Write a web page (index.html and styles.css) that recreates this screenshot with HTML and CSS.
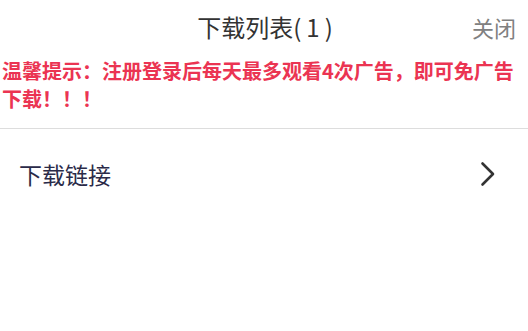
FILE: index.html
```html
<!DOCTYPE html>
<html lang="zh-CN">
<head>
<meta charset="utf-8">
<title>下载列表</title>
<link rel="stylesheet" href="styles.css">
</head>
<body>
<div class="page">
  <header class="header">
    <div class="spacer"></div>
    <h1 class="title">下载列表(<span class="count">1</span>)</h1>
    <div class="close">关闭</div>
  </header>
  <p class="notice">温馨提示：注册登录后每天最多观看4次广告，即可免广告下载！！！</p>
  <div class="divider"></div>
  <div class="row">
    <span class="row-label">下载链接</span>
    <svg class="chevron" width="16" height="26" viewBox="0 0 16 26" aria-hidden="true">
      <path d="M2.5 2.5 L13 13 L2.5 23.5" fill="none" stroke="#333333" stroke-width="2.6" stroke-linecap="round" stroke-linejoin="round"/>
    </svg>
  </div>
</div>
</body>
</html>
```

FILE: styles.css
```css
html, body {
  margin: 0;
  padding: 0;
  background: #ffffff;
}

body {
  font-family: "Noto Sans CJK SC", "Noto Sans", sans-serif;
}

.page {
  width: 528px;
}

.header {
  display: grid;
  grid-template-columns: 1fr auto 1fr;
  align-items: center;
  height: 54px;
}

.title {
  margin: 0;
  font-size: 24px;
  font-weight: 400;
  color: #333333;
  line-height: 30px;
  padding-left: 2px;
}

.count {
  padding: 0 5px;
}

.close {
  justify-self: end;
  padding-right: 12px;
  font-size: 22px;
  color: #808080;
  line-height: 30px;
}

.notice {
  margin: 0;
  padding: 3px 2px 15px 2px;
  font-size: 20px;
  font-weight: 700;
  line-height: 28px;
  color: #eb3452;
}

.divider {
  height: 1px;
  background: #dddddd;
}

.row {
  display: flex;
  align-items: center;
  justify-content: space-between;
  height: 90px;
  padding: 0 32px 0 19px;
}

.row-label {
  font-size: 23px;
  color: #2a2a48;
  line-height: 30px;
}

.chevron {
  display: block;
}
```
